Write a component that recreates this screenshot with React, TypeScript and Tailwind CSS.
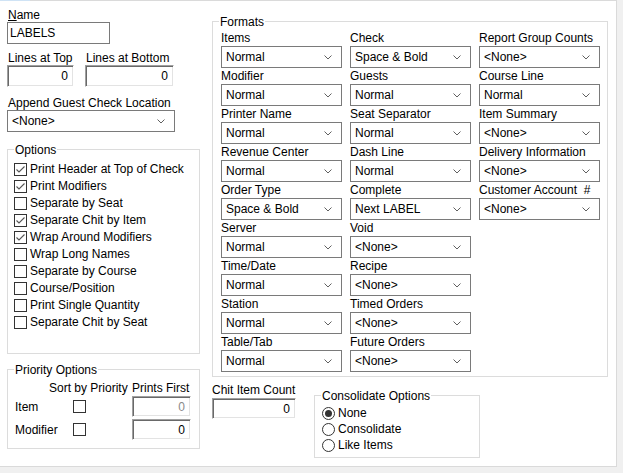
import React from "react";

const fnt = { fontFamily: '"Liberation Sans", Arial, sans-serif' };

function Chevron() {
  return (
    <svg width="8" height="5" viewBox="0 0 8 5" className="shrink-0">
      <path d="M0.5 0.5 L4 4 L7.5 0.5" fill="none" stroke="#606060" strokeWidth="1" />
    </svg>
  );
}

function Select({ value, w = "w-[121px]" }: { value: string; w?: string }) {
  return (
    <div className={`${w} h-[22px] flex items-center justify-between border border-[#7a7a7a] bg-white pl-[4px] pr-[9px] leading-[14px]`}>
      <span className="whitespace-nowrap">{value}</span>
      <Chevron />
    </div>
  );
}

function NumBox({ value, w, disabled }: { value: string; w: string; disabled?: boolean }) {
  return (
    <div
      className={`${w} h-[21px] flex items-center justify-end pr-[5px] border border-t-[#a0a0a0] border-l-[#a0a0a0] border-r-[#ffffff] border-b-[#ffffff] shadow-[inset_1px_1px_0_#696969,inset_-1px_-1px_0_#e3e3e3] bg-white leading-[14px] ${disabled ? "text-[#8a8a8a]" : "text-black"}`}
    >
      {value}
    </div>
  );
}

function CheckBox({ checked }: { checked?: boolean }) {
  return (
    <div className="w-[13px] h-[13px] border border-[#333333] bg-white shrink-0 flex items-center justify-center">
      {checked && (
        <svg width="11" height="11" viewBox="0 0 11 11">
          <path d="M1.5 5.5 L4 8 L9.5 2.5" fill="none" stroke="#555555" strokeWidth="1.1" />
        </svg>
      )}
    </div>
  );
}

function Radio({ checked }: { checked?: boolean }) {
  return (
    <div className="w-[13px] h-[13px] rounded-full border border-[#333333] bg-white shrink-0 flex items-center justify-center">
      {checked && <div className="w-[7px] h-[7px] rounded-full bg-[#333333]" />}
    </div>
  );
}

function Group({ title, className, children }: { title: string; className: string; children: React.ReactNode }) {
  return (
    <div className={`relative border border-[#dcdcdc] ${className}`}>
      <span className="absolute left-[6px] top-[-7px] bg-white px-[1px] leading-[14px] whitespace-nowrap">{title}</span>
      {children}
    </div>
  );
}

const options: [string, boolean][] = [
  ["Print Header at Top of Check", true],
  ["Print Modifiers", true],
  ["Separate by Seat", false],
  ["Separate Chit by Item", true],
  ["Wrap Around Modifiers", true],
  ["Wrap Long Names", false],
  ["Separate by Course", false],
  ["Course/Position", false],
  ["Print Single Quantity", false],
  ["Separate Chit by Seat", false],
];

const col1: [string, string][] = [
  ["Items", "Normal"],
  ["Modifier", "Normal"],
  ["Printer Name", "Normal"],
  ["Revenue Center", "Normal"],
  ["Order Type", "Space & Bold"],
  ["Server", "Normal"],
  ["Time/Date", "Normal"],
  ["Station", "Normal"],
  ["Table/Tab", "Normal"],
];

const col2: [string, string][] = [
  ["Check", "Space & Bold"],
  ["Guests", "Normal"],
  ["Seat Separator", "Normal"],
  ["Dash Line", "Normal"],
  ["Complete", "Next LABEL"],
  ["Void", "<None>"],
  ["Recipe", "<None>"],
  ["Timed Orders", "<None>"],
  ["Future Orders", "<None>"],
];

const col3: [string, string][] = [
  ["Report Group Counts", "<None>"],
  ["Course Line", "Normal"],
  ["Item Summary", "<None>"],
  ["Delivery Information", "<None>"],
  ["Customer Account  #", "<None>"],
];

function FormatColumn({ items }: { items: [string, string][] }) {
  return (
    <div className="flex flex-col w-[121px]">
      {items.map(([label, value]) => (
        <div key={label} className="flex flex-col">
          <div className="h-[16px] leading-[16px] whitespace-pre">{label}</div>
          <Select value={value} />
        </div>
      ))}
    </div>
  );
}

export default function App() {
  return (
    <div className="w-[623px] h-[473px] bg-[#f0f0f0] text-[12px] text-black overflow-hidden" style={fnt}>
      <div className="flex h-[1px]">
        <div className="w-[30px] bg-[#cfe3f5]" />
        <div className="w-[587px] bg-[#dadada]" />
      </div>
      <div className="w-[617px] h-[466px] bg-white border-r border-b border-[#dadada] flex pl-[7px]">
        {/* left column */}
        <div className="flex flex-col w-[193px]">
          <div className="mt-[7px] h-[14px] leading-[14px] pl-[1px]">
            <span className="underline">N</span>ame
          </div>
          <div className="w-[103px] h-[22px] border border-[#7a7a7a] flex items-center pl-[2px] leading-[14px]">LABELS</div>

          <div className="mt-[8px] flex h-[13px] leading-[13px]">
            <span className="w-[78px] pl-[1px]">Lines at Top</span>
            <span className="pl-[1px]">Lines at Bottom</span>
          </div>
          <div className="flex gap-[11px]">
            <NumBox value="0" w="w-[67px] h-[22px]" />
            <NumBox value="0" w="w-[89px] h-[22px]" />
          </div>

          <div className="mt-[10px] h-[13px] leading-[13px] pl-[1px]">Append Guest Check Location</div>
          <Select value="<None>" w="w-[168px]" />

          <Group title="Options" className="mt-[17px] w-[193px] h-[205px] pt-[11px] pl-[6px]">
            {options.map(([label, checked]) => (
              <div key={label} className="h-[17px] flex items-center gap-[3px] leading-[17px] whitespace-nowrap">
                <CheckBox checked={checked} />
                <span>{label}</span>
              </div>
            ))}
          </Group>

          <Group title="Priority Options" className="mt-[15px] w-[193px] h-[80px] pt-[11px] pl-[7px]">
            <div className="flex h-[14px] leading-[14px] whitespace-nowrap">
              <span className="ml-[34px] w-[83px]">Sort by Priority</span>
              <span>Prints First</span>
            </div>
            <div className="mt-[1px] flex items-center h-[21px]">
              <span className="w-[58px] leading-[14px]">Item</span>
              <CheckBox />
              <div className="ml-[46px]">
                <NumBox value="0" w="w-[59px]" disabled />
              </div>
            </div>
            <div className="mt-[2px] flex items-center h-[21px]">
              <span className="w-[58px] leading-[14px]">Modifier</span>
              <CheckBox />
              <div className="ml-[46px]">
                <NumBox value="0" w="w-[59px]" />
              </div>
            </div>
          </Group>
        </div>

        {/* right column */}
        <div className="ml-[12px] flex flex-col">
          <Group title="Formats" className="mt-[20px] w-[396px] h-[356px] pt-[8px] pl-[8px]">
            <div className="flex gap-[8px]">
              <FormatColumn items={col1} />
              <FormatColumn items={col2} />
              <FormatColumn items={col3} />
            </div>
          </Group>

          <div className="flex gap-[18px]">
            <div className="mt-[6px] flex flex-col w-[84px]">
              <div className="h-[14px] leading-[14px] whitespace-nowrap">Chit Item Count</div>
              <div className="mt-[1px]">
                <NumBox value="0" w="w-[84px]" />
              </div>
            </div>
            <Group title="Consolidate Options" className="mt-[18px] w-[166px] h-[63px] pt-[9px] pl-[7px]">
              {[
                ["None", true],
                ["Consolidate", false],
                ["Like Items", false],
              ].map(([label, checked]) => (
                <div key={label as string} className="h-[16px] flex items-center gap-[3px] leading-[16px]">
                  <Radio checked={checked as boolean} />
                  <span>{label as string}</span>
                </div>
              ))}
            </Group>
          </div>
        </div>
      </div>
    </div>
  );
}
